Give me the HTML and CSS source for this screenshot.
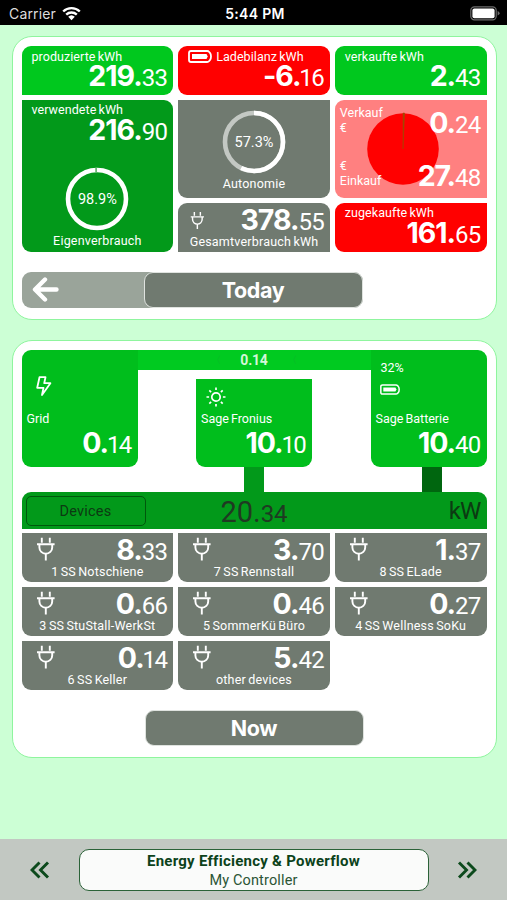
FILE: index.html
```
<!DOCTYPE html>
<html lang="de">
  <head>
    <meta charset="UTF-8" />
    <meta name="viewport" content="width=device-width, initial-scale=1.0" />
    <title>Energy Efficiency &amp; Powerflow</title>
    <link rel="stylesheet" href="styles.css">
  </head>
  <body>
    <!-- shared icons -->
    <svg class="symbols" width="0" height="0">
      <symbol id="plug" viewBox="0 0 20 24">
        <path d="M5.8 0.8v5M13.8 0.8v5M1 7.2h17.6M3.4 7.2v3.2a6.4 6.4 0 0 0 12.8 0V7.2M9.8 17v6.4" fill="none" stroke="#fff" stroke-width="1.9" />
      </symbol>
      <symbol id="battery" viewBox="0 0 24 13">
        <path d="M3 1h16.2q1.2 0 2 1l.8 1q1 1 1 3.5t-1 3.5l-.8 1q-.8 1-2 1H3q-2 0-2-2V3q0-2 2-2z" fill="none" stroke="#fff" stroke-width="1.8" />
        <path d="M4 4h14.5l1.2 2.5L18.500 9H4z" fill="#fff" />
      </symbol>
    </svg>

    <div class="status-bar">
      <div class="carrier">
        <span>Carrier</span>
        <svg width="19" height="15" viewBox="0 0 19 15">
          <path d="M1.2 5.5a12 12 0 0 1 16.6 0M4.2 8.6a7.7 7.7 0 0 1 10.6 0" fill="none" stroke="#fff" stroke-width="2.4" />
          <path d="M6.2 10.8a4.8 4.8 0 0 1 6.6 0L9.5 14.2z" fill="#fff" />
        </svg>
      </div>
      <div class="clock">5:44 PM</div>
      <div class="charge">
        <svg width="31" height="15" viewBox="0 0 31 15">
          <rect x="0.8" y="0.8" width="25.4" height="13" rx="3.6" fill="none" stroke="#6c6c6c" stroke-width="1.2" />
          <rect x="2.4" y="2.4" width="22.2" height="9.8" rx="2" fill="#fff" />
          <path d="M27.6 5q2 1 2 2.3t-2 2.3z" fill="#6c6c6c" />
        </svg>
      </div>
    </div>

    <div class="content">
      <!-- Today -->
      <div class="card today">
        <div class="tiles">
          <div class="tile produced">
            <div class="label">produzierte kWh</div>
            <div class="value"><b>219.</b>33</div>
          </div>
          <div class="tile balance">
            <div class="label">
              <svg class="battery" width="24" height="13"><use href="#battery" /></svg>
              <span>Ladebilanz kWh</span>
            </div>
            <div class="value"><b>-6.</b><span class="one">1</span>6</div>
          </div>
          <div class="tile sold">
            <div class="label">verkaufte kWh</div>
            <div class="value"><b>2.</b>43</div>
          </div>
          <div class="tile used">
            <div class="label">verwendete kWh</div>
            <div class="value"><b>216.</b>90</div>
            <div class="ring">
              <svg width="64" height="64" viewBox="0 0 64 64">
                <circle cx="32" cy="32" r="29" fill="none" stroke="#fff" stroke-width="4.6" />
                <path d="M30.2 3.1h1.8" stroke="#6fb878" stroke-width="4.6" />
              </svg>
              <span>98.9%</span>
            </div>
            <div class="caption">Eigenverbrauch</div>
          </div>
          <div class="tile autonomy">
            <div class="ring">
              <svg width="64" height="64" viewBox="0 0 64 64">
                <circle cx="32" cy="32" r="29" fill="none" stroke="#c3c8c3" stroke-width="4.6" />
                <circle cx="32" cy="32" r="29" fill="none" stroke="#fff" stroke-width="4.6" pathLength="100" stroke-dasharray="57.3 42.7" transform="rotate(-90 32 32)" />
              </svg>
              <span>57.3%</span>
            </div>
            <div class="caption">Autonomie</div>
          </div>
          <div class="tile money">
            <svg class="pie" width="72" height="74" viewBox="0 0 72 74">
              <circle cx="36" cy="38" r="35.8" fill="#ff0000" />
              <path d="M36 38V2l1.6 0z" fill="#a04a00" stroke="#a04a00" stroke-width="0.5" />
            </svg>
            <div class="money-row">
              <div class="money-label">Verkauf<br>€</div>
              <div class="value"><b>0.</b>24</div>
            </div>
            <div class="money-row bottom">
              <div class="money-label">€<br>Einkauf</div>
              <div class="value"><b>27.</b>48</div>
            </div>
          </div>
          <div class="tile total">
            <div class="total-row">
              <svg width="15" height="19"><use href="#plug" /></svg>
              <div class="value"><b>378.</b>55</div>
            </div>
            <div class="caption">Gesamtverbrauch kWh</div>
          </div>
          <div class="tile bought">
            <div class="label">zugekaufte kWh</div>
            <div class="value"><b>161.</b>65</div>
          </div>
        </div>
        <div class="period">
          <div class="back">
            <svg width="28" height="26" viewBox="0 0 28 26">
              <path d="M13 2.500L3 12.500l10 10M3.500 12.500H24.500" fill="none" stroke="#fff" stroke-width="4.4" stroke-linecap="round" stroke-linejoin="round" />
            </svg>
          </div>
          <div class="period-button">Today</div>
        </div>
      </div>

      <!-- Now -->
      <div class="card now">
        <div class="sources">
          <div class="source grid">
            <svg class="source-icon bolt" width="16" height="21" viewBox="0 0 16 21">
              <path d="M3.500 1.200H9.500L8.200 7.200h6.200L6 19l1.500-7.200H1.200z" fill="none" stroke="#fff" stroke-width="1.8" stroke-linejoin="round" />
            </svg>
            <div class="source-name">Grid</div>
            <div class="value"><b>0.</b><span class="one">1</span>4</div>
          </div>
          <div class="middle">
            <div class="link"><i>〈</i>0.14<i>〈</i></div>
            <div class="source solar">
              <svg class="source-icon" width="20" height="20" viewBox="0 0 20 20">
                <circle cx="10" cy="10" r="4.200" fill="none" stroke="#fff" stroke-width="1.700" />
                <path d="M10 0.500v2.600M10 16.900v2.600M0.500 10h2.600M16.900 10h2.600M3.300 3.300l1.800 1.800M14.900 14.900l1.800 1.800M3.300 16.700l1.800-1.800M14.900 5.100l1.800-1.800" stroke="#fff" stroke-width="1.700" />
              </svg>
              <div class="source-name">Sage Fronius</div>
              <div class="value"><b>10.</b><span class="one">1</span>0</div>
            </div>
          </div>
          <div class="source storage">
            <div class="percent">32%</div>
            <svg class="battery" width="20" height="11"><use href="#battery" /></svg>
            <div class="source-name">Sage Batterie</div>
            <div class="value"><b>10.</b>40</div>
          </div>
        </div>
        <div class="pipes">
          <div class="pipe solar-pipe"></div>
          <div class="pipe storage-pipe"></div>
        </div>
        <div class="power">
          <div class="devices-button">Devices</div>
          <div class="power-value">20.<small>34</small></div>
          <div class="unit">kW</div>
        </div>
        <div class="tiles devices">
          <div class="tile device">
            <div class="device-row"><svg width="20" height="24"><use href="#plug" /></svg><div class="value"><b>8.</b>33</div></div>
            <div class="caption">1 SS Notschiene</div>
          </div>
          <div class="tile device">
            <div class="device-row"><svg width="20" height="24"><use href="#plug" /></svg><div class="value"><b>3.</b>70</div></div>
            <div class="caption">7 SS Rennstall</div>
          </div>
          <div class="tile device">
            <div class="device-row"><svg width="20" height="24"><use href="#plug" /></svg><div class="value"><b>1.</b>37</div></div>
            <div class="caption">8 SS ELade</div>
          </div>
          <div class="tile device">
            <div class="device-row"><svg width="20" height="24"><use href="#plug" /></svg><div class="value"><b>0.</b>66</div></div>
            <div class="caption">3 SS StuStall-WerkSt</div>
          </div>
          <div class="tile device">
            <div class="device-row"><svg width="20" height="24"><use href="#plug" /></svg><div class="value"><b>0.</b>46</div></div>
            <div class="caption">5 SommerKü Büro</div>
          </div>
          <div class="tile device">
            <div class="device-row"><svg width="20" height="24"><use href="#plug" /></svg><div class="value"><b>0.</b>27</div></div>
            <div class="caption">4 SS Wellness SoKu</div>
          </div>
          <div class="tile device">
            <div class="device-row"><svg width="20" height="24"><use href="#plug" /></svg><div class="value"><b>0.</b><span class="one">1</span>4</div></div>
            <div class="caption">6 SS Keller</div>
          </div>
          <div class="tile device">
            <div class="device-row"><svg width="20" height="24"><use href="#plug" /></svg><div class="value"><b>5.</b>42</div></div>
            <div class="caption">other devices</div>
          </div>
        </div>
        <div class="period now-period">
          <div class="period-button">Now</div>
        </div>
      </div>
    </div>

    <div class="footer">
      <svg width="20" height="18" viewBox="0 0 20 18">
        <path d="M9.500 1.500L2 9l7.500 7.500M18 1.500L10.500 9l7.500 7.500" fill="none" stroke="#0c4a1c" stroke-width="2.900" />
      </svg>
      <div class="page-title">
        <div class="title">Energy Efficiency &amp; Powerflow</div>
        <div class="subtitle">My Controller</div>
      </div>
      <svg width="20" height="18" viewBox="0 0 20 18">
        <path d="M2 1.500L9.500 9L2 16.500M10.500 1.500L18 9l-7.500 7.500" fill="none" stroke="#0c4a1c" stroke-width="2.900" />
      </svg>
    </div>
  </body>
</html>
```
FILE: styles.css
```
* {
  box-sizing: border-box;
}

body {
  margin: 0;
  width: 507px;
  height: 900px;
  background-color: #ccffd5;
  font-family: Roboto, "Liberation Sans", sans-serif;
  color: #fff;
  display: flex;
  flex-direction: column;
  overflow: hidden;
}

.symbols {
  position: absolute;
}

svg {
  display: block;
  flex: none;
}

.status-bar {
  height: 25px;
  background-color: #000;
  display: grid;
  grid-template-columns: 1fr auto 1fr;
  align-items: center;
  padding: 2px 6px 0 9px;
  font-family: Inter, sans-serif;
  font-size: 14px;
}

.carrier {
  display: flex;
  align-items: center;
  gap: 6px;
  color: #ddd;
  letter-spacing: 0.15px;
}

.clock {
  font-weight: 600;
  letter-spacing: 0.3px;
}

.charge {
  justify-self: end;
}

.content {
  flex: 1;
  padding: 11px 10.5px 0 11.5px;
}

.card {
  background-color: #fff;
  border: 1px solid #8ff59e;
  border-radius: 20px;
  padding: 9px;
}

.today {
  height: 284px;
}

.now {
  height: 418px;
  margin-top: 20px;
}

/* Tiles */
.tiles {
  display: grid;
  grid-template-columns: repeat(3, 1fr);
  grid-template-rows: 49px 98px 49px;
  gap: 5px;
}

.tile {
  border-radius: 9px;
  background-color: #707a70;
  display: flex;
  flex-direction: column;
  position: relative;
}

.label {
  font-size: 12.5px;
  line-height: 15px;
  padding: 3px 0 0 10px;
  height: 16px;
  display: flex;
  word-spacing: -1px;
  letter-spacing: 0.06px;
}

.value {
  font-size: 24px;
  line-height: 27px;
  font-weight: 400;
  letter-spacing: -0.8px;
  text-align: right;
  padding-right: 6px;
  white-space: nowrap;
}

.value b {
  font-family: Inter, sans-serif;
  font-size: 28.5px;
  font-weight: 750;
  letter-spacing: -1px;
}

/* tighter leading 1 in the decimals */
.one {
  margin-left: -1.2px;
  letter-spacing: -1.6px;
}

.caption {
  font-size: 12.5px;
  line-height: 15px;
  text-align: center;
  word-spacing: -1px;
  letter-spacing: 0.2px;
}

.produced {
  background-color: #00c81e;
  border-bottom-left-radius: 0;
}

.balance {
  background-color: #ff0000;
}

.balance .label {
  gap: 4px;
}

.balance .battery {
  margin-top: 1px;
}

.sold {
  background-color: #00c81e;
  border-bottom-right-radius: 0;
}

.used {
  grid-row: span 2;
  background-color: #02991a;
  border-top-left-radius: 0;
}

.used .label {
  padding-top: 2px;
}

.used .ring {
  margin-top: 21px;
  margin-bottom: 2px;
}

.autonomy {
  border-top-left-radius: 0;
  border-top-right-radius: 0;
}

.autonomy .ring {
  margin-top: 10px;
}

.ring {
  display: grid;
  place-items: center;
  margin-bottom: 2px;
}

.ring > * {
  grid-area: 1 / 1;
}

.ring span {
  font-size: 14.5px;
}

.money {
  background-color: #ff8080;
  border-top-right-radius: 0;
  border-bottom-right-radius: 0;
  justify-content: space-between;
}

.pie {
  position: absolute;
  left: 32px;
  top: 11px;
}

.money-row {
  position: relative;
  display: flex;
  justify-content: space-between;
  padding: 5px 0 0 5px;
}

.money-label {
  font-size: 12.5px;
  line-height: 15px;
}

.money .value {
  padding-top: 4px;
}

.money-row.bottom {
  padding: 0 0 6px 5px;
}

.total {
  border-bottom-left-radius: 0;
  border-bottom-right-radius: 0;
}

.total-row {
  display: flex;
  justify-content: space-between;
  padding: 3px 0 0 12px;
  height: 31px;
}

.total-row svg {
  margin-top: 5px;
}

.bought {
  background-color: #ff0000;
  border-top-right-radius: 0;
}

.bought .label {
  padding-top: 2px;
}

/* Period switch */
.period {
  margin-top: 20px;
  width: 341px;
  height: 36px;
  background-color: #9aa49a;
  border-radius: 9px;
  display: flex;
}

.back {
  width: 122px;
  padding: 5px 0 0 10px;
}

.period-button {
  width: 219px;
  height: 36px;
  border: 1px solid #dfe3df;
  border-radius: 9px;
  background-color: #707a70;
  font-family: Inter, sans-serif;
  font-weight: 700;
  font-size: 21.5px;
  line-height: 34px;
  letter-spacing: -0.4px;
  text-align: center;
}

.now-period {
  background: none;
  width: auto;
  justify-content: center;
}

/* Power flow */
.sources {
  display: flex;
  height: 117px;
}

.source {
  width: 116px;
  height: 117px;
  background-color: #00be1c;
  border-radius: 9px;
  display: flex;
  flex-direction: column;
}

.source .value {
  margin-top: 3px;
}

.source-icon {
  margin-left: 10px;
}

.source-name {
  font-size: 12.5px;
  line-height: 15px;
  margin: 11px 0 0 5px;
  word-spacing: -1px;
}

.grid {
  border-top-right-radius: 0;
  padding-top: 26px;
}

.grid .source-icon {
  margin-left: 14px;
}

.grid .source-name {
  margin-top: 14px;
}

.middle {
  flex: 1;
  display: flex;
  flex-direction: column;
  align-items: center;
  justify-content: space-between;
}

.link {
  width: 100%;
  height: 20px;
  background-color: #00ca20;
  color: #d4f7d8;
  font-size: 14px;
  font-weight: 700;
  line-height: 21px;
  letter-spacing: -0.2px;
  display: flex;
  justify-content: center;
  gap: 20px;
}

.link i {
  color: #08bd26;
  font-size: 9px;
  font-style: normal;
}

.solar {
  height: 88px;
  border-top-left-radius: 0;
  border-top-right-radius: 0;
  padding-top: 8px;
}

.solar .source-name {
  margin-top: 4px;
}

.storage {
  border-top-left-radius: 0;
  padding-top: 10px;
}

.percent {
  font-size: 12.5px;
  line-height: 15px;
  margin-left: 10px;
}

.storage .battery {
  margin: 9px 0 0 9px;
}

.storage .source-name {
  margin-top: 16px;
}

.pipes {
  display: grid;
  grid-template-columns: repeat(8, 1fr);
  height: 25px;
}

.pipe {
  width: 20px;
  justify-self: center;
}

.solar-pipe {
  grid-column: 4 / 6;
  background-color: #02991a;
}

.storage-pipe {
  grid-column: 7 / 9;
  margin-left: 8px;
  background-color: #00660f;
}

.power {
  height: 37px;
  margin-bottom: 4px;
  background-color: #02991a;
  border-radius: 9px 9px 0 0;
  display: grid;
  grid-template-columns: 1fr auto 1fr;
  align-items: center;
  padding: 0 6px 0 4px;
  color: #0c3a12;
}

.devices-button {
  width: 120px;
  height: 30px;
  border: 1px solid #00580c;
  border-radius: 5px;
  font-size: 14.5px;
  line-height: 29px;
  letter-spacing: 0.2px;
  text-align: center;
}

.power-value {
  font-size: 29px;
  padding: 2px 0 0 2px;
  color: #1f3a22;
}

.power-value small {
  font-size: 24px;
}

.unit {
  font-size: 24px;
  letter-spacing: -0.8px;
  text-align: right;
}

.devices {
  grid-template-rows: repeat(3, 49px);
}

.device {
  border-top-left-radius: 0;
  border-top-right-radius: 0;
}

.device-row {
  display: flex;
  justify-content: space-between;
  padding: 3px 0 0 14px;
  height: 31px;
}

.device-row svg {
  margin-top: 1px;
}

/* Footer */
.footer {
  height: 61px;
  background-color: #c2c8c2;
  display: flex;
  align-items: center;
  justify-content: space-between;
  padding: 0 30px;
}

.page-title {
  width: 350px;
  height: 42px;
  border: 1px solid #2b6238;
  border-radius: 10px;
  background-color: #fafbfa;
  color: #0c421a;
  text-align: center;
  font-size: 14.5px;
  line-height: 19px;
  padding-top: 2px;
}

.title {
  font-size: 15px;
  font-weight: 700;
  letter-spacing: 0.25px;
}

.subtitle {
  color: #2b5535;
  letter-spacing: 0.15px;
}
```
